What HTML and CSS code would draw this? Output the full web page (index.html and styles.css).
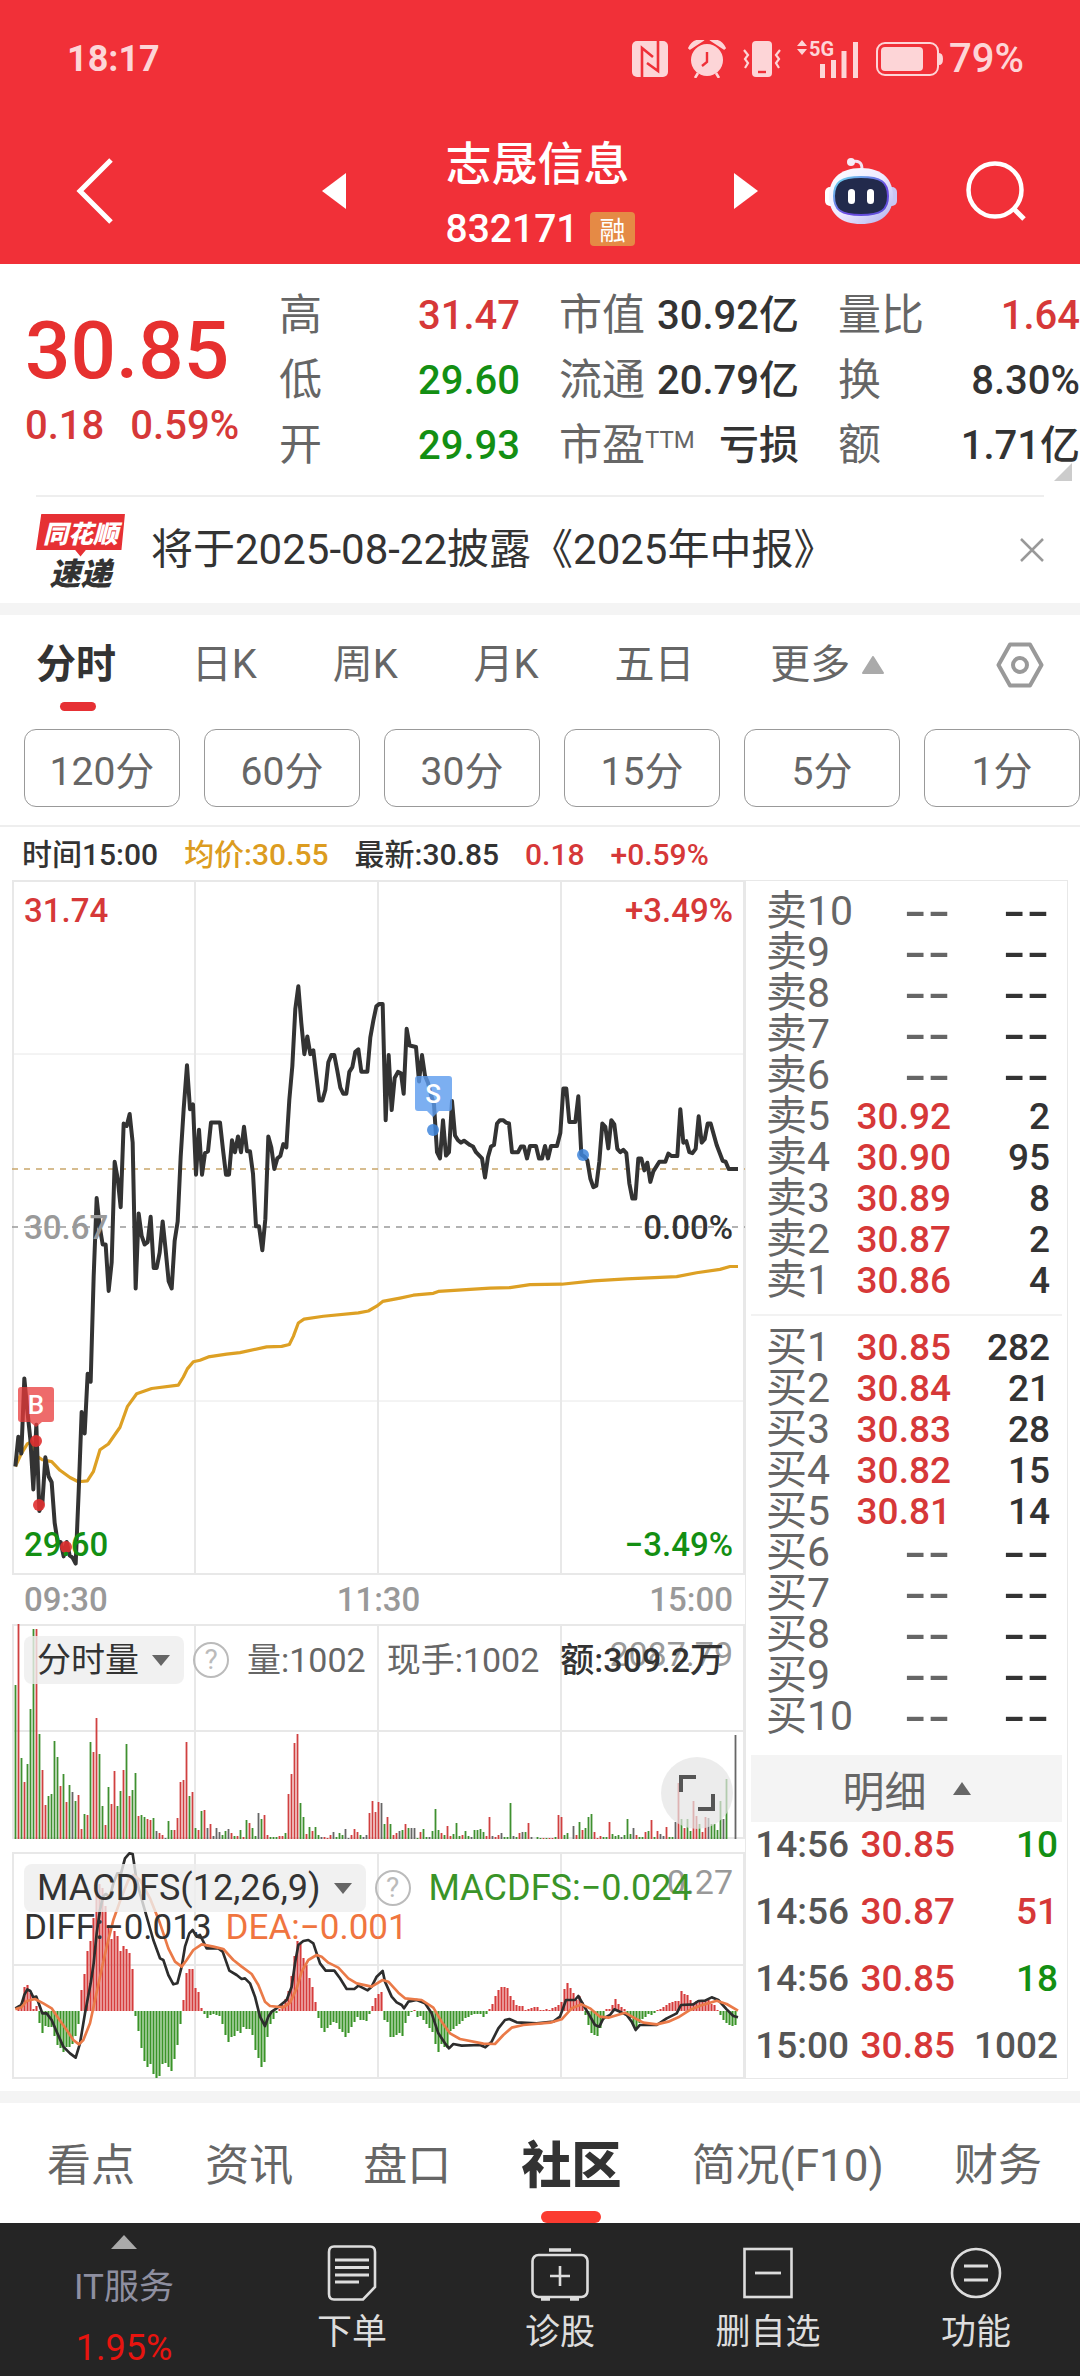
FILE: index.html
```html
<!DOCTYPE html>
<html lang="zh-CN">
<head>
<meta charset="utf-8">
<meta name="viewport" content="width=device-width">
<title>志晟信息 832171</title>
<link rel="stylesheet" href="styles.css">
</head>
<body>
<header class="top">
  <div class="status">
    <span class="clock">18:17</span>
    <div class="status-icons">
      <svg class="nfc" width="36" height="36" viewBox="0 0 36 36"><rect width="36" height="36" rx="5" fill="#fdd5d7"/><path d="M10 36V7L21 16M26 0V30L15 22" fill="none" stroke="#ef3038" stroke-width="2.6"/></svg>
      <svg class="alarm" width="38" height="38" viewBox="0 0 38 38"><circle cx="19" cy="20" r="16" fill="#fdd5d7"/><path d="M1 9Q5 0 13 1L1 9M37 9Q33 0 25 1L37 9M10 33L7 38M28 33L31 38" fill="#fdd5d7" stroke="#fdd5d7" stroke-width="2.6"/><path d="M19 12V22L14 26" fill="none" stroke="#ef3038" stroke-width="2.4"/></svg>
      <svg class="vibrate" width="38" height="36" viewBox="0 0 38 36"><rect x="9" width="20" height="36" rx="4" fill="#fdd5d7"/><path d="M15 31H23" stroke="#ef3038" stroke-width="2.4"/><path d="M1 9L5 14L2 18L5 22L2 27M37 9L33 14L36 18L33 22L36 27" fill="none" stroke="#fdd5d7" stroke-width="2.2"/></svg>
      <svg class="signal" width="62" height="38" viewBox="0 0 62 38"><path d="M0 6L5 0L10 6ZM0 9L5 15L10 9Z" fill="#fdd5d7"/><text x="12" y="16" class="signal-text">5G</text><path d="M25.500 38V24M36.500 38V20M47 38V11M58.500 38V2" stroke="#fdd5d7" stroke-width="5"/></svg>
      <svg class="battery" width="67" height="34" viewBox="0 0 67 34"><rect x="1" y="1" width="61" height="32" rx="8" fill="none" stroke="#fdd5d7" stroke-width="2"/><rect x="5" y="5" width="42" height="24" rx="4" fill="#fdd5d7"/><path d="M63 11Q67 11 67 17Q67 23 63 23Z" fill="#fdd5d7"/></svg>
      <span class="charge">79%</span>
    </div>
  </div>
  <div class="titlebar">
    <button class="icon-btn back" aria-label="返回"><svg width="38" height="66" viewBox="0 0 38 66"><path d="M35 2L4 33L35 64" fill="none" stroke="#fff" stroke-width="5"/></svg></button>
    <div class="stock-switch">
      <button class="icon-btn" aria-label="上一只"><svg width="24" height="36" viewBox="0 0 24 36"><path d="M24 0V36L0 18Z" fill="#fff"/></svg></button>
      <div class="stock-name">
        <h1>志晟信息</h1>
        <p><span>832171</span><em>融</em></p>
      </div>
      <button class="icon-btn" aria-label="下一只"><svg width="24" height="36" viewBox="0 0 24 36"><path d="M0 0V36L24 18Z" fill="#fff"/></svg></button>
    </div>
    <div class="title-actions">
      <button class="icon-btn" aria-label="智能助手">
        <svg width="72" height="66" viewBox="0 0 72 66">
          <defs><linearGradient id="shell" x1="0" y1="0" x2="1" y2="1"><stop offset="0" stop-color="#fff"/><stop offset=".5" stop-color="#eeeaff"/><stop offset="1" stop-color="#aeb0ee"/></linearGradient>
          <linearGradient id="rim" x1="0" y1="0" x2="1" y2="1"><stop offset="0" stop-color="#6fe0f0"/><stop offset=".6" stop-color="#6a4ae0"/><stop offset="1" stop-color="#5a50d8"/></linearGradient></defs>
          <path d="M26 4Q37 1 37 11" fill="none" stroke="#f3e2f0" stroke-width="3"/><circle cx="26" cy="4" r="4" fill="#f6ecf6"/>
          <rect y="29" width="14" height="19" rx="5" fill="#fff"/><rect x="58" y="29" width="14" height="19" rx="5" fill="#c9c6f4"/>
          <path d="M36 10C58 10 68 22 68 38C68 56 56 66 36 66C16 66 4 56 4 38C4 22 14 10 36 10Z" fill="url(#shell)"/>
          <path d="M36 19C56 19 63 24 63 38C63 52 56 57 36 57C16 57 9 52 9 38C9 24 16 19 36 19Z" fill="#222a4c" stroke="url(#rim)" stroke-width="2"/>
          <rect x="23" y="31" width="7" height="15" rx="3.500" fill="#fff"/><rect x="42" y="31" width="7" height="15" rx="3.500" fill="#fff"/>
        </svg>
      </button>
      <button class="icon-btn" aria-label="搜索"><svg width="60" height="60" viewBox="0 0 60 60"><circle cx="29" cy="29" r="26.500" fill="none" stroke="#fff" stroke-width="4.500"/><path d="M47 47L58 58" stroke="#fff" stroke-width="5"/></svg></button>
    </div>
  </div>
</header>

<main>
  <section class="quote">
    <div class="last">
      <strong>30.85</strong>
      <p><span>0.18</span><span>0.59%</span></p>
    </div>
    <dl>
      <div><dt>高</dt><dd class="up">31.47</dd></div>
      <div><dt>低</dt><dd class="down">29.60</dd></div>
      <div><dt>开</dt><dd class="down">29.93</dd></div>
    </dl>
    <dl>
      <div><dt>市值</dt><dd>30.92亿</dd></div>
      <div><dt>流通</dt><dd>20.79亿</dd></div>
      <div><dt>市盈<sup>TTM</sup></dt><dd>亏损</dd></div>
    </dl>
    <dl>
      <div><dt>量比</dt><dd class="up">1.64</dd></div>
      <div><dt>换</dt><dd>8.30%</dd></div>
      <div><dt>额</dt><dd>1.71亿</dd></div>
    </dl>
    <i class="corner"></i>
  </section>

  <section class="news">
    <div class="news-logo"><b>同花顺</b><i>速递</i></div>
    <a href="#report">将于2025-08-22披露《2025年中报》</a>
    <button class="icon-btn" aria-label="关闭"><svg width="24" height="24" viewBox="0 0 24 24"><path d="M1 1L23 23M23 1L1 23" stroke="#999" stroke-width="2.500"/></svg></button>
  </section>

  <section class="periods">
    <nav class="period-tabs">
      <a class="on" href="#min">分时</a><a href="#day">日K</a><a href="#week">周K</a><a href="#month">月K</a><a href="#five">五日</a>
      <a class="more" href="#more">更多<svg width="22" height="18" viewBox="0 0 22 18"><path d="M11 1L21 17H1Z" fill="#aaa" stroke="#aaa" stroke-width="2" stroke-linejoin="round"/></svg></a>
      <button class="icon-btn gear" aria-label="设置"><svg width="48" height="46" viewBox="0 0 48 46"><path d="M14 2.500H34L45.500 23L34 43.500H14L2.500 23Z" fill="none" stroke="#999" stroke-width="4" stroke-linejoin="round"/><circle cx="24" cy="23" r="7" fill="none" stroke="#999" stroke-width="4"/></svg></button>
    </nav>
    <div class="minutes">
      <button>120分</button><button>60分</button><button>30分</button><button>15分</button><button>5分</button><button>1分</button>
    </div>
  </section>

  <section class="board">
    <p class="readout"><span>时间15:00</span><span class="avg">均价:30.55</span><span>最新:30.85</span><span class="up">0.18</span><span class="up">+0.59%</span></p>
    <div class="columns">
      <div class="charts">
        <figure class="price-chart">
          <svg viewBox="0 0 733 696">
            <g class="grid"><path d="M0 1H733M0 694H733M1 0V695M183 0V695M366 0V695M549 0V695M732 0V695"/><path class="thin" d="M0 174H733M0 521H733"/></g>
            <path d="M0 289H733" stroke="#c9a66b" stroke-width="1.500" stroke-dasharray="6 6" fill="none"/>
            <path d="M0 347H733" stroke="#999" stroke-width="1.500" stroke-dasharray="6 6" fill="none"/>
            <g id="price-lines" transform="translate(-12 -10) scale(.33333 .47831)" fill="none" stroke-linejoin="round"></g>
            <path d="M7 507H39Q42 507 42 510V539Q42 542 39 542H30L24 547L18 542H9Q6 542 6 539V510Q6 507 9 507Z" fill="#e83a3a" opacity=".75"/>
            <path d="M406 196H437Q440 196 440 199V228Q440 231 437 231H427L421 237L415 231H406Q403 231 403 228V199Q403 196 406 196Z" fill="#5b9bee" opacity=".8"/>
            <g fill="#e03030" opacity=".9"><circle cx="24" cy="561" r="6"/><circle cx="27" cy="625" r="6"/><circle cx="54" cy="667" r="6"/></g>
            <g fill="#3f86dc" opacity=".85"><circle cx="421" cy="250" r="6"/><circle cx="571" cy="275" r="6"/></g>
            <text class="marker" x="24" y="534">B</text><text class="marker" x="421" y="223">S</text>
          </svg>
          <figcaption class="scale">
            <p><span class="up">31.74</span><span class="up">+3.49%</span></p>
            <p><span class="pale">30.67</span><span class="ink">0.00%</span></p>
            <p><span class="down">29.60</span><span class="down">−3.49%</span></p>
          </figcaption>
        </figure>
        <p class="time-axis"><span>09:30</span><span>11:30</span><span>15:00</span></p>
        <figure class="volume-chart">
          <svg viewBox="0 0 733 215">
            <g class="grid"><path d="M0 1H733M0 107H733M0 214H733M1 0V215M183 0V215M366 0V215M549 0V215M732 0V215"/></g>
            <g id="volume-bars"></g>
          </svg>
          <span class="peak">2087.79</span>
          <figcaption class="legend">
            <button class="pill">分时量<svg width="20" height="13" viewBox="0 0 20 13"><path d="M1 1H19L10 12Z" fill="#666"/></svg></button>
            <span class="help">?</span>
            <span>量:1002</span><span>现手:1002</span><span class="ink amount">额:309.2万</span>
          </figcaption>
          <button class="icon-btn expand" aria-label="全屏"><svg width="36" height="36" viewBox="0 0 36 36"><path d="M2 17V2H17M34 19V34H19" fill="none" stroke="#555" stroke-width="4"/></svg></button>
        </figure>
        <figure class="macd-chart">
          <svg viewBox="0 0 733 227">
            <g class="grid"><path d="M0 1H733M0 113H733M0 226H733M1 0V227M183 0V227M366 0V227M549 0V227M732 0V227"/></g>
            <g id="macd-bars"></g>
            <g id="macd-lines" transform="translate(-12 -252) scale(.33333)" fill="none" stroke-linejoin="round"></g>
          </svg>
          <span class="peak">0.27</span>
          <figcaption class="legend latin">
            <button class="pill">MACDFS(12,26,9)<svg width="20" height="13" viewBox="0 0 20 13"><path d="M1 1H19L10 12Z" fill="#666"/></svg></button>
            <span class="help">?</span>
            <span class="macd-value">MACDFS:−0.024</span>
          </figcaption>
          <p class="legend-2"><span>DIFF:−0.013</span><span class="dea">DEA:−0.001</span></p>
        </figure>
      </div>

      <aside class="depth">
        <table class="orders">
          <tbody>
            <tr><th>卖10</th><td class="none">--</td><td class="none">--</td></tr>
            <tr><th>卖9</th><td class="none">--</td><td class="none">--</td></tr>
            <tr><th>卖8</th><td class="none">--</td><td class="none">--</td></tr>
            <tr><th>卖7</th><td class="none">--</td><td class="none">--</td></tr>
            <tr><th>卖6</th><td class="none">--</td><td class="none">--</td></tr>
            <tr><th>卖5</th><td>30.92</td><td>2</td></tr>
            <tr><th>卖4</th><td>30.90</td><td>95</td></tr>
            <tr><th>卖3</th><td>30.89</td><td>8</td></tr>
            <tr><th>卖2</th><td>30.87</td><td>2</td></tr>
            <tr><th>卖1</th><td>30.86</td><td>4</td></tr>
          </tbody>
        </table>
        <hr>
        <table class="orders">
          <tbody>
            <tr><th>买1</th><td>30.85</td><td>282</td></tr>
            <tr><th>买2</th><td>30.84</td><td>21</td></tr>
            <tr><th>买3</th><td>30.83</td><td>28</td></tr>
            <tr><th>买4</th><td>30.82</td><td>15</td></tr>
            <tr><th>买5</th><td>30.81</td><td>14</td></tr>
            <tr><th>买6</th><td class="none">--</td><td class="none">--</td></tr>
            <tr><th>买7</th><td class="none">--</td><td class="none">--</td></tr>
            <tr><th>买8</th><td class="none">--</td><td class="none">--</td></tr>
            <tr><th>买9</th><td class="none">--</td><td class="none">--</td></tr>
            <tr><th>买10</th><td class="none">--</td><td class="none">--</td></tr>
          </tbody>
        </table>
        <button class="detail-head">明细<svg width="18" height="13" viewBox="0 0 18 13"><path d="M9 0L18 13H0Z" fill="#666"/></svg></button>
        <table class="trades">
          <tbody>
            <tr><td>14:56</td><td class="up">30.85</td><td class="down">10</td></tr>
            <tr><td>14:56</td><td class="up">30.87</td><td class="up">51</td></tr>
            <tr><td>14:56</td><td class="up">30.85</td><td class="down">18</td></tr>
            <tr><td>15:00</td><td class="up">30.85</td><td>1002</td></tr>
          </tbody>
        </table>
      </aside>
    </div>
  </section>

  <nav class="section-tabs">
    <a href="#view">看点</a><a href="#info">资讯</a><a href="#tape">盘口</a><a class="on" href="#community">社区</a><a href="#f10">简况(F10)</a><a href="#finance">财务</a>
  </nav>
</main>

<footer class="toolbar">
  <a class="sector" href="#sector"><svg width="26" height="14" viewBox="0 0 26 14"><path d="M13 0L26 14H0Z" fill="#aaa"/></svg><span>IT服务</span><b>1.95%</b></a>
  <a href="#order"><svg width="56" height="56" viewBox="0 0 56 56"><path d="M10 1.500H46Q51 1.500 51 7V42L39 54.500H10Q5 54.500 5 49V7Q5 1.500 10 1.500Z" fill="none" stroke="#ddd" stroke-width="2.600"/><path d="M11 15H45M11 22.500H45M11 30H45M11 37H35" stroke="#ddd" stroke-width="2.800"/></svg><span>下单</span></a>
  <a href="#diagnose"><svg width="58" height="56" viewBox="0 0 58 56"><rect x="1.500" y="10" width="55" height="42" rx="6" fill="none" stroke="#ddd" stroke-width="2.600"/><path d="M18 5H40M10 54H19M39 54H48" stroke="#ddd" stroke-width="3.500"/><path d="M29 21V41M19 31H39" stroke="#ddd" stroke-width="2.600"/></svg><span>诊股</span></a>
  <a href="#remove"><svg width="50" height="56" viewBox="0 0 50 56"><rect x="1.500" y="4" width="47" height="48" fill="none" stroke="#ddd" stroke-width="2.600"/><path d="M12 28H38" stroke="#ddd" stroke-width="2.800"/></svg><span>删自选</span></a>
  <a href="#tools"><svg width="52" height="56" viewBox="0 0 52 56"><circle cx="26" cy="28" r="24" fill="none" stroke="#ddd" stroke-width="2.600"/><path d="M14 21H38M14 35H38" stroke="#ddd" stroke-width="2.800"/></svg><span>功能</span></a>
</footer>
<script src="charts.js"></script>
</body>
</html>
```
FILE: styles.css
```css
* { box-sizing: border-box; }
body, h1, p, dl, dd, figure { margin: 0; }
body {
  background: #fff;
  color: #333;
  font-family: Roboto, "Noto Sans CJK SC", sans-serif;
  font-size: 40px;
  overflow-x: hidden;
}
a { color: inherit; text-decoration: none; }
button { font: inherit; color: inherit; background: none; border: 0; padding: 0; }
svg { display: block; flex: none; }
.icon-btn { display: flex; }
.up { color: #d63838; }
.down { color: #138f13; }
.pale { color: #999; }
.ink { color: #333; }

/* red header */
.top { background: #f13038; color: #fff; }
.status {
  display: flex;
  align-items: center;
  justify-content: space-between;
  height: 118px;
  padding: 0 56px 0 67px;
  color: #fdd5d7;
  font-size: 36px;
  font-weight: 700;
  line-height: 44px;
}
.status-icons { display: flex; align-items: center; }
.alarm { margin-left: 20px; }
.vibrate { margin-left: 17px; }
.signal { margin-left: 16px; overflow: visible; }
.battery { margin-left: 17px; }
.charge { margin-left: 6px; font-size: 40px; font-weight: 500; }
.signal-text { font: 700 20px Roboto, sans-serif; fill: #fdd5d7; }
.titlebar {
  display: grid;
  grid-template-columns: 1fr 436px 1fr;
  align-items: center;
  height: 146px;
}
.back { padding-left: 76px; }
.stock-switch { display: flex; align-items: center; justify-content: space-between; }
.stock-name { padding-top: 10px; }
.stock-name h1 { font-size: 46px; line-height: 66px; font-weight: 500; }
.stock-name p { display: flex; align-items: center; gap: 12px; font-weight: 500; font-size: 39px; line-height: 64px; }
.stock-name em {
  background: #e58a45;
  border-radius: 4px;
  font: 400 26px/34px "Noto Sans CJK SC", sans-serif;
  padding: 0 9px;
}
.title-actions { display: flex; align-items: center; gap: 69px; padding-left: 67px; }

/* quote summary */
.quote {
  display: grid;
  grid-template-columns: 240fr 241fr 240fr 242fr;
  column-gap: 39px;
  position: relative;
  height: 231px;
  padding-top: 19px;
}
.last { padding: 15px 0 0 25px; color: #e6302f; font-weight: 500; }
.last strong { display: block; font-weight: 500; font-size: 80px; line-height: 106px; white-space: nowrap; }
.last p { display: flex; gap: 26px; font-size: 40px; line-height: 44px; color: #d63838; }
.quote dl > div { display: flex; justify-content: space-between; line-height: 65px; white-space: nowrap; }
.quote dt { color: #666; font-size: 43px; }
.quote dd { font-weight: 500; font-size: 40px; }
.quote sup { font-size: 24px; line-height: 24px; vertical-align: 12px; }
.corner { position: absolute; right: 8px; bottom: 14px; border-left: 18px solid transparent; border-bottom: 18px solid #ccc; }

/* announcement */
.news {
  display: flex;
  align-items: center;
  height: 108px;
  margin: 0 36px;
  border-top: 2px solid #eee;
}
.news a { flex: 1; margin-left: 26px; font-size: 42px; line-height: 60px; }
.news-logo { width: 89px; text-align: center; }
.news-logo b {
  display: block;
  height: 43px;
  background: #e63034;
  clip-path: polygon(6% 0, 100% 0, 96% 85%, 56% 85%, 50% 100%, 44% 85%, 0 85%);
  color: #fff;
  font: italic 900 25px/36px "Noto Sans CJK SC", sans-serif;
}
.news-logo i { display: block; font: italic 900 31px/30px "Noto Sans CJK SC", sans-serif; }

/* period choice */
.periods { border-top: 12px solid #f4f4f4; border-bottom: 2px solid #eee; padding-bottom: 18px; }
.period-tabs {
  display: flex;
  align-items: center;
  justify-content: space-between;
  height: 100px;
  padding: 0 36px;
  color: #666;
  line-height: 60px;
}
.period-tabs .on { position: relative; color: #333; font-weight: 700; }
.period-tabs .on::after {
  content: "";
  position: absolute;
  left: 24px;
  bottom: -16px;
  width: 36px;
  height: 9px;
  border-radius: 5px;
  background: #e63034;
}
.period-tabs .more { display: flex; align-items: center; gap: 12px; }
.gear { margin-left: 36px; }
.minutes { display: grid; grid-template-columns: repeat(6, 1fr); gap: 24px; margin: 14px 0 0 24px; }
.minutes button { height: 78px; border: 1px solid #999; border-radius: 12px; color: #666; font-size: 39px; }

/* charts and order book */
.readout { display: flex; gap: 26px; padding: 3px 0 0 22px; font-size: 30px; font-weight: 500; line-height: 50px; }
.readout .avg { color: #dc9c20; }
.columns { display: grid; grid-template-columns: 733fr 323fr; margin: 0 12px; }
.charts figure { position: relative; }
.charts svg { width: 100%; }
.charts button svg { width: auto; }
.grid path { fill: none; stroke: #e8e8e8; stroke-width: 2; }
.grid .thin { stroke-width: 1; }
.line { vector-effect: non-scaling-stroke; }
.marker { font: 500 26px Roboto, sans-serif; fill: #fff; text-anchor: middle; }
.scale {
  position: absolute;
  inset: 8px 12px;
  display: flex;
  flex-direction: column;
  justify-content: space-between;
  font-size: 33px;
  line-height: 46px;
  font-weight: 500;
}
.scale p, .time-axis { display: flex; justify-content: space-between; }
.time-axis { padding: 0 12px; font-size: 33px; line-height: 48px; color: #999; font-weight: 500; }
.legend {
  position: absolute;
  top: 12px;
  left: 12px;
  display: flex;
  align-items: center;
  color: #666;
  font-size: 34px;
  line-height: 48px;
  white-space: nowrap;
}
.pill { display: flex; align-items: center; gap: 12px; padding: 0 13px; height: 48px; border-radius: 8px; background: rgba(238, 238, 238, .8); color: #333; }
.help { width: 36px; height: 36px; margin: 0 18px 0 9px; border: 2px solid #bbb; border-radius: 50%; color: #bbb; font: 400 28px/32px Roboto, sans-serif; text-align: center; }
.legend span + span { margin-right: 21px; }
.legend .amount { margin-right: 0; font-weight: 500; }
.latin { font-size: 36px; }
.macd-value { color: #3a9428; }
.peak { position: absolute; right: 12px; top: 6px; font-size: 34px; line-height: 48px; color: #999; }
.legend-2 { position: absolute; left: 12px; top: 56px; display: flex; gap: 14px; font-size: 35px; line-height: 40px; }
.dea { color: #f0753f; }
.expand { position: absolute; right: 12px; bottom: 10px; width: 72px; height: 72px; border-radius: 50%; background: rgba(228, 228, 228, .7); align-items: center; justify-content: center; }
.macd-chart { margin-top: 13px; }
.depth { border: 1px solid #e8e8e8; padding: 10px 5px 0; }
.depth table { width: 100%; border-collapse: collapse; table-layout: fixed; font-size: 37px; font-weight: 500; text-align: right; }
.depth td, .depth th { padding: 0; }
.orders th { width: 92px; padding-left: 15px; text-align: left; font-size: 41px; font-weight: 400; line-height: 41px; color: #666; white-space: nowrap; }
.orders td { line-height: 41px; height: 41px; }
.orders td:nth-child(2) { width: 108px; color: #d63838; }
.orders td:nth-child(3) { padding-right: 12px; }
.orders .none { font: 400 52px/41px Inter, sans-serif; }
.orders td.none:nth-child(2) { color: #666; }
.depth hr { height: 2px; margin: 13px 0 11px; border: 0; background: #f2f2f2; }
.detail-head { display: flex; align-items: center; justify-content: center; gap: 26px; width: 100%; height: 67px; margin-top: 18px; background: #f4f4f4; color: #666; font-size: 42px; }
.trades td { line-height: 46px; padding-bottom: 21px; color: #555; }
.trades tr:last-child td { padding-bottom: 8px; }
.trades td:first-child { width: 98px; }
.trades td:nth-child(2) { width: 106px; }
.trades td:nth-child(3) { padding-right: 4px; }
.trades td.up { color: #d63838; }
.trades td.down { color: #138f13; }

/* content tabs */
.section-tabs {
  display: flex;
  align-items: center;
  justify-content: space-between;
  height: 132px;
  margin-top: 12px;
  border-top: 12px solid #f4f4f4;
  padding: 6px 38px 0 47px;
  color: #666;
  font-size: 44px;
  line-height: 64px;
}
.section-tabs .on { position: relative; color: #333; font-size: 50px; font-weight: 900; }
.section-tabs .on::after { content: ""; position: absolute; left: 20px; bottom: -25px; width: 60px; height: 12px; border-radius: 8px; background: #fb3b30; }

/* bottom toolbar */
.toolbar { display: grid; grid-template-columns: 248fr repeat(4, 208fr); min-height: 153px; background: #252525; color: #ddd; font-size: 35px; line-height: 52px; }
.toolbar a { display: flex; flex-direction: column; align-items: center; padding-top: 22px; }
.toolbar span { margin-top: 6px; }
.toolbar .sector { padding-top: 12px; color: #8e8fa0; }
.toolbar .sector span { margin-top: 13px; }
.toolbar b { margin-top: 8px; color: #e8140f; font-weight: 400; font-size: 36px; }
```
FILE: charts.js
```js
const NS = "http://www.w3.org/2000/svg";
const COLORS = { r: "#d04040", g: "#3f9030", k: "#666666" };

function addPath(parentId, d, stroke, width, cls) {
  const path = document.createElementNS(NS, "path");
  path.setAttribute("d", d);
  path.setAttribute("stroke", stroke);
  path.setAttribute("stroke-width", width);
  if (cls) path.setAttribute("class", cls);
  document.getElementById(parentId).appendChild(path);
}

function line(points) {
  return "M" + points.trim().split(/\s+/).join("L");
}

// One entry per minute: direction (r up, g down, k flat) and bar height.
const volume = `g154 r215 g81 r57 g75 g130 g210 r210 g105 r69 r34 g43 g45 g98 g82 r53 g65 r37 g54 k47 g38 r44 r10 g25 r24 g97 r87 r121 g85 g33
r14 g52 r35 r68 g33 g48 r69 g95 r43 g49 g66 r23 g24 g22 r20 r19 g21 k8 r6 r4 k1 g18 g9 r9 r21 r57 r59 r97 g43 r47 g11 r9 g28 r29 k11 r15 k3 k11 k7 g4
g8 k10 r6 g3 r3 g9 r2 g19 r16 g11 g3 k26 g20 r24 r4 g2 g2 g2 r3 r3 g6 r45 r65 r96 r105 g36 g22 r5 g12 r8 g12 g4 k2 r2 r1 r4 k7 g2 g6 g4
k10 k1 r4 r10 r7 g4 k2 k4 r26 r38 r27 r37 k36 g15 r22 g15 r4 r6 k8 g9 r15 g11 k11 k11 g1 r7 g10 g2 k2 g8 g30 g9 r6 g4 r13 r3 g5 g16 g3 r4
g8 g3 k2 g9 g9 g10 g7 r3 r22 k3 r2 r4 k6 g2 g2 g36 k3 g2 r6 k7 g7 r16 k2 k0 g2 g1 r1 g1 r1 r1 g2 r24 r22 g4 g6 k0 k13 r4 g17 r9
g11 g22 g25 r7 r1 r3 g2 g2 r17 g5 g3 g4 k2 g4 g20 g5 k11 r4 g2 g2 r7 g8 r19 g2 r8 k5 k3 r12 g2 g2 k17 r56 g20 r11 g20 g8 r38 r23 g15 r7
r22 k21 g15 g15 g9 g38 k20 g60 k0 k0 k104`.split(/\s+/);
for (const key of Object.keys(COLORS)) {
  const d = volume.map((v, i) => v[0] === key && +v.slice(1) ? `M${3.5 + i * 3} 215v-${v.slice(1)}` : "").join("");
  addPath("volume-bars", d, COLORS[key], 1.8);
}

const macd = [0,2,8,24,26,18,2,5,-12,-22,-15,-16,-16,-25,-34,-37,-41,-36,-36,-33,-25,-13,21,37,60,70,93,118,127,123,105,86,72,80,75,60,65,62,58,42,
-5,-20,-37,-50,-56,-53,-63,-67,-65,-53,-52,-56,-60,-48,-34,-13,11,38,42,42,23,19,3,-3,-7,-4,-3,-4,-5,-13,-24,-31,-26,-25,-20,-22,-16,-18,-18,-24,
-39,-47,-56,-51,-26,-13,-8,-2,2,6,12,20,35,55,70,67,53,46,33,24,9,-7,-17,-21,-17,-14,-11,-12,-18,-21,-26,-22,-16,-11,-6,-9,-9,-10,-3,5,
13,17,19,-9,-11,-26,-26,-24,-22,-25,-12,-5,-1,1,-6,-5,-9,-13,-17,-21,-33,-41,-33,-36,-37,-20,-18,-15,-13,-10,-7,-6,-4,-3,-3,-3,-6,-3,2,7,
15,21,24,24,23,15,11,6,5,5,1,2,3,4,4,1,1,2,1,3,4,6,9,22,28,23,18,11,15,9,-4,-14,-22,-24,-25,-17,-9,2,2,6,
12,7,4,2,-4,-7,-14,-17,-12,-8,-6,-3,-4,-2,1,2,4,6,8,9,10,10,20,17,16,11,8,10,9,9,10,11,7,6,1,-4,-9,-12,-14,-15,-14];
const bars = (keep) => macd.map((v, i) => keep(v) ? `M${3.5 + i * 3} 159v${-v}` : "").join("");
addPath("macd-bars", bars((v) => v > 0), "#d63c3c", 2.1);
addPath("macd-bars", bars((v) => v < 0), "#3a9428", 2.1);

addPath("price-lines", line(`46,1247 64,1220 82,1200 95,1195 109,1225 127,1233 155,1237 180,1255 210,1270 235,1279 262,1277 280,1258 300,1212 325,1200 360,1165 382,1122
410,1095 455,1084 535,1077 550,1060 562,1043 580,1028 600,1025 625,1018 680,1012 720,1009 800,997 845,996 868,992 880,975 895,947 912,939 970,933 1075,926 1105,922
1130,912 1148,902 1200,895 1240,889 1300,885 1315,881 1470,874 1530,873 1590,867 1685,866 1780,859 1880,855 2030,850 2090,842 2160,835 2190,829 2214,829`), "#dda024", 3.2, "line");
addPath("price-lines", line(`46,1247 55,1185 64,1220 73,1063 82,1130 91,1190 100,1295 109,1160 118,1340 127,1325 136,1228 146,1268 155,1280 164,1365 173,1405 182,1405 191,1435
200,1405 209,1433 218,1438 227,1450 236,1300 245,1133 254,1178 263,1053 272,1070 281,850 290,686 299,745 308,783 317,783 326,880 335,820 344,610 353,645 362,705 371,530
380,535 389,510 398,570 407,875 416,718 425,765 434,783 443,778 452,725 461,832 470,832 479,800 488,735 497,795 506,860 515,875 524,775 533,735 542,600 551,500 561,408
570,500 579,490 588,637 597,543 606,637 615,592 624,588 633,528 660,528 669,585 678,637 687,637 696,565 705,590 714,557 723,590 732,537 741,588 750,588 759,635 768,745
777,745 787,795 796,730 805,557 814,580 823,625 832,603 841,598 850,573 859,580 868,480 877,410 886,290 895,243 904,320 913,385 922,348 931,385 940,377 949,430 958,482
967,482 976,460 985,402 994,387 1003,387 1012,420 1021,455 1030,468 1039,468 1048,422 1057,412 1066,380 1075,375 1084,422 1102,422 1111,350 1120,315 1129,285 1138,280
1148,280 1157,523 1166,387 1175,502 1184,435 1194,422 1203,425 1211,468 1220,332 1229,367 1248,370 1257,442 1266,387 1275,430 1284,445 1293,470 1302,490 1311,590 1320,603
1329,523 1338,597 1347,590 1356,483 1365,555 1374,565 1383,570 1392,566 1410,575 1419,578 1428,590 1446,603 1455,643 1464,600 1473,578 1482,575 1491,530 1500,523 1510,523
1518,528 1527,530 1536,590 1554,590 1563,578 1572,578 1581,603 1590,577 1608,577 1617,603 1626,603 1635,577 1644,603 1653,577 1671,577 1681,550 1690,457 1699,457 1708,527
1726,527 1735,473 1744,595 1754,600 1762,607 1771,645 1780,663 1789,660 1798,610 1807,530 1816,537 1825,582 1834,523 1843,532 1852,583 1861,590 1870,585 1879,592 1888,655
1897,687 1906,687 1915,603 1924,603 1933,628 1942,612 1951,652 1960,630 1978,610 1996,610 2005,593 2014,598 2032,598 2041,500 2050,570 2059,567 2068,590 2077,592 2087,583
2096,515 2105,570 2114,563 2123,530 2132,530 2150,575 2168,608 2177,610 2186,625 2214,625`), "#333", 4, "line");

addPath("macd-lines", line(`46,1225 64,1215 73,1185 82,1168 91,1173 100,1192 109,1190 118,1215 127,1240 140,1240 155,1260 172,1300 190,1340 210,1360 227,1373 240,1330 255,1240
272,1150 281,1090 290,1000 300,930 309,890 317,882 330,890 340,850 352,820 363,820 375,775 388,760 398,762 408,830 420,880 440,950 460,1020 480,1075 490,1080 505,1125
520,1153 532,1150 545,1100 555,1040 568,1000 578,990 590,1010 600,1005 610,1025 620,1045 655,1045 668,1055 688,1112 710,1125 725,1137 735,1135 750,1150 765,1190 780,1250
795,1278 805,1250 815,1235 830,1225 860,1200 875,1160 885,1090 895,1035 910,1023 925,1020 940,1030 950,1060 960,1090 977,1112 1003,1112 1020,1135 1040,1167 1063,1167
1075,1157 1103,1171 1115,1160 1130,1130 1148,1113 1155,1145 1175,1190 1190,1207 1205,1215 1212,1225 1225,1205 1250,1200 1275,1210 1295,1240 1315,1300 1335,1330 1347,1345
1360,1332 1385,1337 1440,1335 1456,1342 1475,1325 1495,1285 1515,1260 1528,1257 1550,1267 1610,1270 1660,1265 1680,1250 1698,1200 1725,1200 1735,1188 1750,1215 1765,1240
1785,1275 1798,1280 1810,1255 1830,1245 1843,1228 1860,1235 1880,1245 1895,1265 1907,1290 1920,1275 1970,1275 2000,1255 2030,1240 2043,1215 2080,1213 2095,1203 2115,1202
2135,1192 2155,1200 2180,1228 2200,1248 2214,1252`), "#2d2d2d", 8);
addPath("macd-lines", line(`46,1228 64,1222 80,1203 105,1197 130,1210 155,1225 175,1255 200,1290 220,1320 237,1333 250,1320 270,1270 285,1200 300,1130 320,1040 340,960 365,890
385,840 400,825 420,840 450,895 480,970 505,1045 525,1085 545,1100 560,1080 580,1050 605,1033 640,1040 670,1047 700,1080 725,1100 755,1122 775,1155 795,1205 810,1218
850,1222 870,1208 890,1165 905,1115 925,1080 950,1065 965,1070 985,1088 1015,1103 1045,1135 1070,1150 1115,1160 1148,1140 1165,1145 1195,1178 1215,1195 1265,1200 1300,1223
1325,1265 1350,1300 1380,1317 1450,1331 1485,1332 1510,1305 1535,1283 1570,1275 1650,1268 1685,1258 1715,1225 1745,1213 1770,1225 1800,1250 1825,1253 1875,1238 1900,1252
1930,1268 1970,1273 2005,1265 2035,1252 2070,1230 2100,1217 2150,1202 2180,1212 2214,1232`), "#ea7a48", 8);
```
